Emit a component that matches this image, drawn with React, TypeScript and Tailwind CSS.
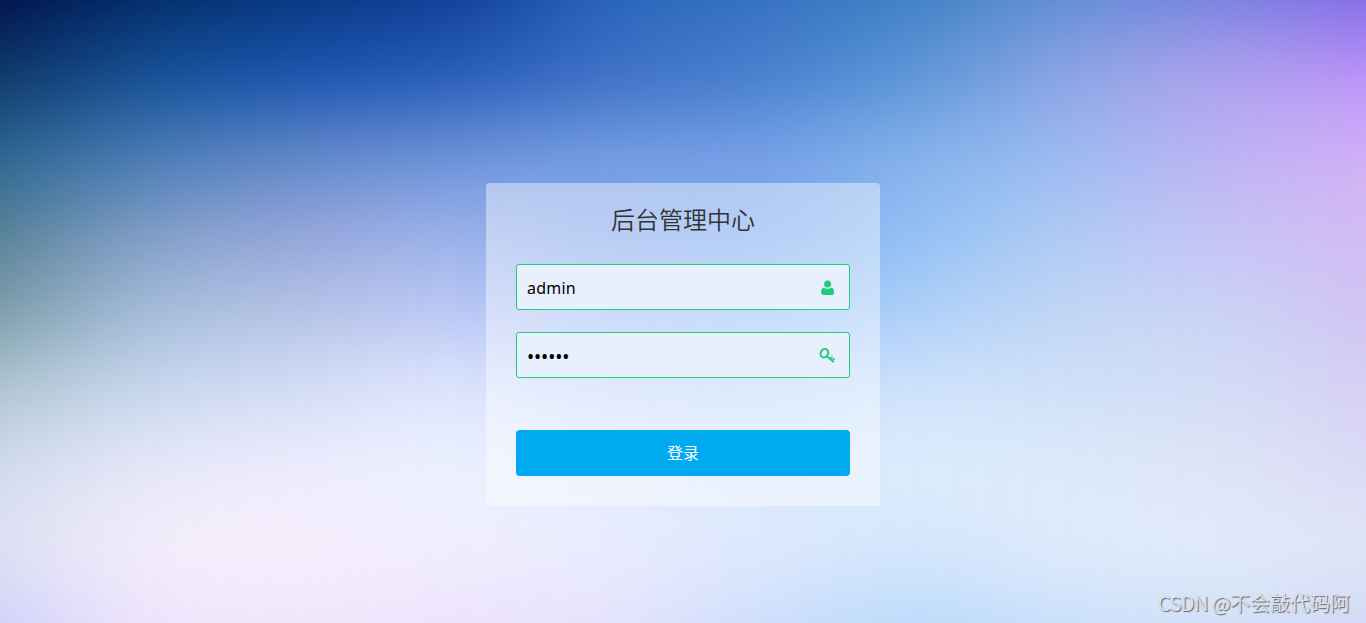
import React from "react";

// Mesh backdrop control colours: one row per column of the picture, top to bottom
const mesh = [
  ["#03164f", "#123c6d", "#2f6690", "#59829a", "#80a0ae", "#b0c5d2", "#d0daec", "#dcdff3", "#d3d3fb"],
  ["#05306e", "#1a5296", "#4b7bb4", "#7f9dc6", "#a4bbd9", "#c7d6ec", "#e4e6f7", "#f0ebfa", "#ede4fc"],
  ["#0a3a85", "#2159ae", "#6086c8", "#92a6da", "#b4c3e6", "#d3dcf6", "#ebebfc", "#f4edfc", "#f1e6fc"],
  ["#14449c", "#2e62ba", "#6a90d8", "#98b0e8", "#bac8f4", "#dbe3fc", "#eaeffe", "#efedfe", "#ede4fc"],
  ["#2a64b8", "#4274c8", "#719ae0", "#87aaec", "#a6c1f4", "#cbdafb", "#e1e9fe", "#e8ebfe", "#e5e3fc"],
  ["#3872c2", "#4c83d0", "#749fe6", "#82adf0", "#9dc3f6", "#c3dbfb", "#d9e8fc", "#dce8fd", "#d0dffc"],
  ["#4582c6", "#6097d9", "#83b0ea", "#94bff4", "#adcff8", "#cde1fb", "#daebfc", "#d4e6fc", "#bfdcfb"],
  ["#658fd7", "#8aa4e4", "#9cb9f0", "#aec9f3", "#c0d5f5", "#cfe0f9", "#dbe9fa", "#dce9fb", "#cbe0fb"],
  ["#7d86e0", "#a9a1ed", "#bab3f2", "#c4c3f5", "#cad2f5", "#d3dcf6", "#dde4f6", "#dfe9f9", "#d3e1f8"],
  ["#8a70e8", "#b993f6", "#cfaef6", "#d2bbf3", "#d1c4f4", "#d6d0f4", "#dbdaf6", "#dde3f6", "#d2dbf8"],
];

const STEPS = 4;

type Rgb = number[];

const toRgb = (hex: string): Rgb => [1, 3, 5].map((i) => parseInt(hex.slice(i, i + 2), 16));

// Catmull-Rom subdivision of a list of points
function subdivide(points: Rgb[]): Rgb[] {
  const result: Rgb[] = [];
  for (let i = 0; i < points.length - 1; i++) {
    const p1 = points[i];
    const p2 = points[i + 1];
    const p0 = points[i - 1] ?? p1.map((v, k) => 2 * v - p2[k]);
    const p3 = points[i + 2] ?? p2.map((v, k) => 2 * v - p1[k]);
    for (let s = 0; s < STEPS; s++) {
      const t = s / STEPS;
      result.push(
        p1.map(
          (v, k) =>
            v +
            0.5 * t * (p2[k] - p0[k] + t * (2 * p0[k] - 5 * v + 4 * p2[k] - p3[k] + t * (3 * (v - p2[k]) + p3[k] - p0[k])))
        )
      );
    }
  }
  result.push(points[points.length - 1]);
  return result;
}

const rows = mesh.map((column) => subdivide(column.map(toRgb)));
const flat = subdivide(rows.map((column) => column.flat()));
const columns = flat.map((values) => {
  const stops: string[] = [];
  for (let i = 0; i < values.length; i += 3) {
    stops.push(`rgb(${values.slice(i, i + 3).map((v) => v.toFixed(1)).join(" ")})`);
  }
  return stops.join(", ");
});

function Backdrop() {
  const last = columns.length - 1;
  return (
    <div className="absolute inset-0" aria-hidden="true">
      {columns.map((stops, i) => (
        <div
          key={i}
          className="absolute inset-0"
          style={{
            backgroundImage: `linear-gradient(to bottom, ${stops})`,
            maskImage: `linear-gradient(to right, transparent ${((i - 1) / last) * 100}%, #000 ${(i / last) * 100}%)`,
          }}
        />
      ))}
    </div>
  );
}

function UserIcon() {
  return (
    <svg viewBox="0 0 16 16" className="w-4 h-4 mt-px shrink-0" fill="#22cc77">
      <circle cx="8.6" cy="4.1" r="3.5" />
      <path d="M4.9 7.4C5.9 8.3 7.2 8.7 8.6 8.7s2.7-.4 3.7-1.3c1.8.3 2.8 2 2.8 4.6 0 2-.8 3-2.3 3H4.4c-1.5 0-2.3-1-2.3-3 0-2.6 1-4.3 2.8-4.6z" />
    </svg>
  );
}

function KeyIcon() {
  return (
    <svg viewBox="0 0 16 16" className="w-4 h-4 mt-0.5 shrink-0" fill="none" stroke="#22cc77" strokeLinecap="round">
      <ellipse cx="5.4" cy="5.2" rx="3.6" ry="4.4" strokeWidth="2" transform="rotate(28 5.4 5.2)" />
      <path d="M8.2 8.6l6 5" strokeWidth="2" />
      <path d="M11.4 10.4l1.7-1.4M13.3 12.1l2-1.4" strokeWidth="1.5" />
    </svg>
  );
}

export default function App() {
  return (
    <div className="relative w-full h-[623px] overflow-hidden font-['Noto_Sans','Noto_Sans_CJK_SC',sans-serif]">
      <Backdrop />

      <div className="relative flex justify-center pt-[183px]">
        <form className="w-[394px] h-[323px] px-[30px] rounded-[4px] bg-white/42" onSubmit={(e) => e.preventDefault()}>
          <h1 className="h-[81px] pt-[18px] text-center text-2xl leading-9 font-[350] text-[#333] font-['Noto_Sans_CJK_SC',sans-serif]">
            后台管理中心
          </h1>

          <label className="flex items-center h-[46px] pl-[10px] pr-[14px] rounded-[3px] border border-[#22cc77] bg-[#e8f0fe]">
            <input
              type="text"
              defaultValue="admin"
              className="flex-1 min-w-0 pt-0.5 text-base tracking-[0.2px] text-black outline-none"
            />
            <UserIcon />
          </label>

          <label className="flex items-center h-[46px] mt-[22px] pl-[10px] pr-[14px] rounded-[3px] border border-[#22cc77] bg-[#e8f0fe]">
            <input
              type="password"
              defaultValue="123456"
              className="flex-1 min-w-0 pt-1 text-[19px] leading-6 tracking-[-0.1px] text-black outline-none"
            />
            <KeyIcon />
          </label>

          <button type="submit" className="block w-full h-[46px] mt-[52px] rounded-[4px] bg-[#00aaf1] text-base text-white">
            登录
          </button>
        </form>
      </div>

      {/* Watermark */}
      <span className="absolute right-[16px] bottom-[5px] text-xl leading-[30px] whitespace-nowrap text-[#dde0e5] [text-shadow:1px_1px_1px_#5f656e] font-['Noto_Sans_CJK_SC',sans-serif]">
        <span className="tracking-[-0.6px]">CSDN @</span>不会敲代码阿
      </span>
    </div>
  );
}
